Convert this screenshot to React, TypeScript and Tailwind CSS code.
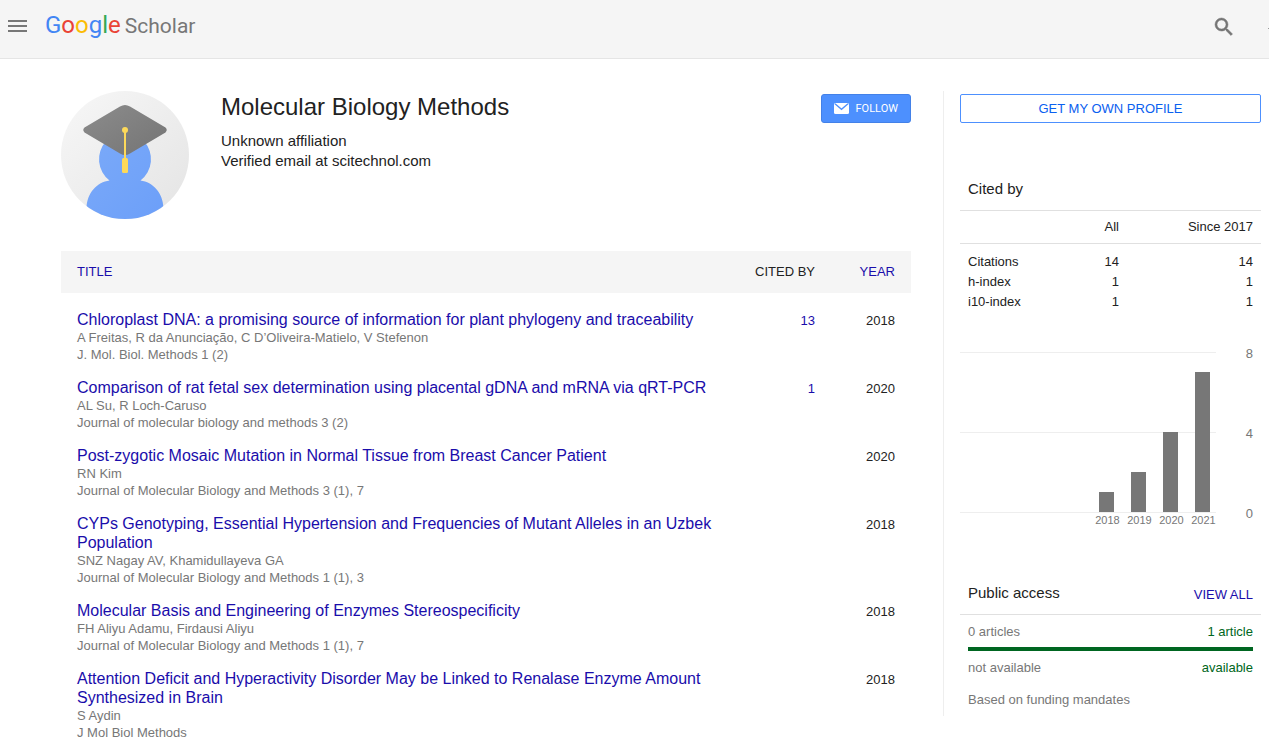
import React from "react";

// interfaces
interface IArticle {
    title: string;
    authors: string;
    journal: string;
    citedBy?: number;
    year: number;
}

// data
const articles: IArticle[] = [
    {
        title: "Chloroplast DNA: a promising source of information for plant phylogeny and traceability",
        authors: "A Freitas, R da Anunciação, C D’Oliveira-Matielo, V Stefenon",
        journal: "J. Mol. Biol. Methods 1 (2)",
        citedBy: 13,
        year: 2018,
    },
    {
        title: "Comparison of rat fetal sex determination using placental gDNA and mRNA via qRT-PCR",
        authors: "AL Su, R Loch-Caruso",
        journal: "Journal of molecular biology and methods 3 (2)",
        citedBy: 1,
        year: 2020,
    },
    {
        title: "Post-zygotic Mosaic Mutation in Normal Tissue from Breast Cancer Patient",
        authors: "RN Kim",
        journal: "Journal of Molecular Biology and Methods 3 (1), 7",
        year: 2020,
    },
    {
        title: "CYPs Genotyping, Essential Hypertension and Frequencies of Mutant Alleles in an Uzbek Population",
        authors: "SNZ Nagay AV, Khamidullayeva GA",
        journal: "Journal of Molecular Biology and Methods 1 (1), 3",
        year: 2018,
    },
    {
        title: "Molecular Basis and Engineering of Enzymes Stereospecificity",
        authors: "FH Aliyu Adamu, Firdausi Aliyu",
        journal: "Journal of Molecular Biology and Methods 1 (1), 7",
        year: 2018,
    },
    {
        title: "Attention Deficit and Hyperactivity Disorder May be Linked to Renalase Enzyme Amount Synthesized in Brain",
        authors: "S Aydin",
        journal: "J Mol Biol Methods",
        year: 2018,
    },
];

const metrics = [
    { label: "Citations", all: 14, since: 14 },
    { label: "h-index", all: 1, since: 1 },
    { label: "i10-index", all: 1, since: 1 },
];

const citations = [
    { year: 2018, count: 1 },
    { year: 2019, count: 2 },
    { year: 2020, count: 4 },
    { year: 2021, count: 7 },
];

const Logo: React.FC = () => (
    <a href="#" className="inline-flex items-baseline font-['Roboto',sans-serif] leading-8 whitespace-nowrap">
        <span className="text-2xl leading-8">
            <span className="text-[#4285f4]">G</span>
            <span className="text-[#ea4335]">o</span>
            <span className="text-[#fbbc05]">o</span>
            <span className="text-[#4285f4]">g</span>
            <span className="text-[#34a853]">l</span>
            <span className="text-[#ea4335]">e</span>
        </span>
        <span className="ml-1 text-[21px] text-[#777]">Scholar</span>
    </a>
);

const Header: React.FC = () => (
    <header className="flex h-[59px] items-start border-b border-[#e5e5e5] bg-[#f5f5f5]">
        <button type="button" aria-label="Menu" className="mt-5 ml-2">
            <svg width="19" height="12" viewBox="0 0 19 12" fill="#777" className="block">
                <path d="M0 0h19v2H0zM0 5h19v2H0zM0 10h19v2H0z" />
            </svg>
        </button>
        <div className="mt-[9px] ml-[18px] flex-1">
            <Logo />
        </div>
        <button type="button" aria-label="Search" className="mt-[15px] mr-8">
            <svg width="24" height="24" viewBox="0 0 24 24" fill="#757575" className="block">
                <path
                    d="M15.5 14h-.79l-.28-.27A6.471 6.471 0 0 0 16 9.5 6.5 6.5 0 1 0 9.5 16c1.61 0 3.09-.59 4.23-1.57l.27.28v.79l5 4.99L20.49 19l-4.99-5zm-6 0C7.01 14 5 11.99 5 9.5S7.01 5 9.5 5 14 7.01 14 9.5 11.99 14 9.5 14z"
                    stroke="#757575"
                    strokeWidth=".5"
                />
            </svg>
        </button>
        <span className="mt-7 h-px w-px bg-[#999]" />
    </header>
);

const Avatar: React.FC = () => (
    <svg width="128" height="128" viewBox="0 0 128 128" className="shrink-0">
        <defs>
            <linearGradient id="bg" x1="0" y1="0" x2="1" y2="1">
                <stop offset="0" stopColor="#f7f7f7" />
                <stop offset="1" stopColor="#e4e4e4" />
            </linearGradient>
            <linearGradient id="body" x1="0" y1="0" x2="1" y2="1">
                <stop offset="0" stopColor="#7baaf9" />
                <stop offset="1" stopColor="#6c9ff9" />
            </linearGradient>
            <linearGradient id="cap" x1="0" y1="0" x2="1" y2="1">
                <stop offset="0" stopColor="#8c8c8c" />
                <stop offset="1" stopColor="#747474" />
            </linearGradient>
            <clipPath id="round">
                <circle cx="64" cy="64" r="64" />
            </clipPath>
        </defs>
        <g clipPath="url(#round)">
            <rect width="128" height="128" fill="url(#bg)" />
            <path
                d="M25.5 128V117C26 102 36 91 48.5 89.5A26 26.5 0 1 1 79.5 89.5C92 91 102 102 102.5 117V128Z"
                fill="url(#body)"
            />
        </g>
        <path
            d="M59 15.5Q64 12.5 69 15.5L104.5 36.6Q107 39 104.5 41.4L69 62.5Q64 65.5 59 62.5L23.5 41.4Q21 39 23.5 36.6Z"
            fill="url(#cap)"
        />
        <g fill="#fdd95a">
            <circle cx="64" cy="39" r="3" />
            <rect x="63" y="39" width="2" height="30" />
            <rect x="61" y="67" width="6" height="15" rx="1.5" />
        </g>
    </svg>
);

const Profile: React.FC = () => (
    <section className="flex items-start">
        <Avatar />
        <div className="ml-8 flex-1">
            <h1 className="text-2xl">Molecular Biology Methods</h1>
            <div className="mt-2 text-[15px] leading-5">
                <p>Unknown affiliation</p>
                <p>Verified email at scitechnol.com</p>
            </div>
        </div>
        <button
            type="button"
            className="mt-[3px] flex h-[29px] items-center gap-[7px] rounded-[3px] border border-[#4381e8] bg-[#4d90fe] px-3 font-['Roboto',sans-serif] text-[11px] leading-[13px] text-white"
        >
            <svg width="15" height="11" viewBox="0 0 15 11">
                <rect width="15" height="11" rx="1.5" fill="#fff" />
                <path d="M1 .8 7.5 6.3 14 .8" fill="none" stroke="#4d90fe" strokeWidth="1.3" />
            </svg>
            FOLLOW
        </button>
    </section>
);

const ArticleTable: React.FC = () => (
    <table className="mt-8 w-full text-[13px]">
        <thead>
            <tr className="h-[42px] bg-[#f5f5f5]">
                <th className="pl-4 text-left font-normal">
                    <a href="#" className="text-[#1a0dab]">TITLE</a>
                </th>
                <th className="w-[95px] text-right font-normal">CITED BY</th>
                <th className="w-24 pr-4 text-right font-normal">
                    <a href="#" className="text-[#1a0dab]">YEAR</a>
                </th>
            </tr>
        </thead>
        <tbody className="before:block before:h-0.5">
            {articles.map((article) => (
                <tr key={article.title} className="align-top">
                    <td className="pt-[15px] pl-4 leading-[17px] text-[#777]">
                        <a href="#" className="block text-base leading-[19px] text-[#1a0dab]">
                            {article.title}
                        </a>
                        <p>{article.authors}</p>
                        <p>{article.journal}</p>
                    </td>
                    <td className="pt-[15px] text-right leading-[22px]">
                        {article.citedBy && (
                            <a href="#" className="text-[#1a0dab]">{article.citedBy}</a>
                        )}
                    </td>
                    <td className="pt-[15px] pr-4 text-right leading-[22px]">{article.year}</td>
                </tr>
            ))}
        </tbody>
    </table>
);

const CitedBy: React.FC = () => (
    <section>
        <h2 className="px-2 text-[15px] leading-5">Cited by</h2>
        <table className="mt-[11px] w-full text-right leading-5">
            <thead>
                <tr className="h-[33px] border-y border-[#e0e0e0]">
                    <th />
                    <th className="font-normal">All</th>
                    <th className="w-[142px] pr-2 font-normal">Since 2017</th>
                </tr>
            </thead>
            <tbody className="before:block before:h-2">
                {metrics.map((metric) => (
                    <tr key={metric.label}>
                        <th className="pl-2 text-left font-normal">{metric.label}</th>
                        <td>{metric.all}</td>
                        <td className="pr-2">{metric.since}</td>
                    </tr>
                ))}
            </tbody>
        </table>
    </section>
);

const CitationChart: React.FC = () => (
    <div className="mt-8 flex justify-between pt-2 pr-2 text-[#777]">
        <div className="w-64">
            <div className="relative flex h-[161px] items-end justify-end gap-[17px] pr-[6px] pb-px">
                <div className="absolute inset-0 flex flex-col justify-between">
                    <div className="h-px bg-[#eee]" />
                    <div className="h-px bg-[#eee]" />
                    <div className="h-px bg-[#eee]" />
                </div>
                {citations.map((item) => (
                    <div
                        key={item.year}
                        className="relative w-[15px] bg-[#777]"
                        style={{ height: item.count * 20 }}
                    />
                ))}
            </div>
            <div className="flex justify-end gap-[7px] text-[11px] leading-[14px]">
                {citations.map((item) => (
                    <span key={item.year} className="w-[25px] text-center">{item.year}</span>
                ))}
            </div>
        </div>
        <div className="-my-2 flex h-[180px] flex-col justify-between leading-5">
            <span>8</span>
            <span>4</span>
            <span>0</span>
        </div>
    </div>
);

const PublicAccess: React.FC = () => (
    <section className="mt-14 leading-4">
        <div className="flex items-end justify-between border-b border-[#e0e0e0] px-2 pb-[11px]">
            <h2 className="text-[15px] leading-5">Public access</h2>
            <a href="#" className="text-[#1a0dab]">VIEW ALL</a>
        </div>
        <div className="px-2 pt-[9px] text-[#777]">
            <div className="flex justify-between">
                <span>0 articles</span>
                <span className="text-[#006621]">1 article</span>
            </div>
            <div className="mt-[7px] mb-[9px] h-1 bg-[#006621]" />
            <div className="flex justify-between">
                <span>not available</span>
                <span className="text-[#006621]">available</span>
            </div>
            <p className="mt-4 pb-2">Based on funding mandates</p>
        </div>
    </section>
);

const App: React.FC = () => {
    return (
        <div className="min-h-screen bg-white font-['Liberation_Sans',Arial,sans-serif] text-[13px] text-[#222]">
            <Header />
            <div className="flex items-start pt-8 pr-2 pl-[61px]">
                <main className="min-w-0 flex-1">
                    <Profile />
                    <ArticleTable />
                </main>
                <aside className="ml-8 w-[318px] shrink-0 border-l border-[#eee] pl-4">
                    <button
                        type="button"
                        className="mt-[3px] mb-14 h-[29px] w-full rounded-[2px] border border-[#4d90fe] text-[#0a60f0]"
                    >
                        GET MY OWN PROFILE
                    </button>
                    <CitedBy />
                    <CitationChart />
                    <PublicAccess />
                </aside>
            </div>
        </div>
    );
};

export default App;
